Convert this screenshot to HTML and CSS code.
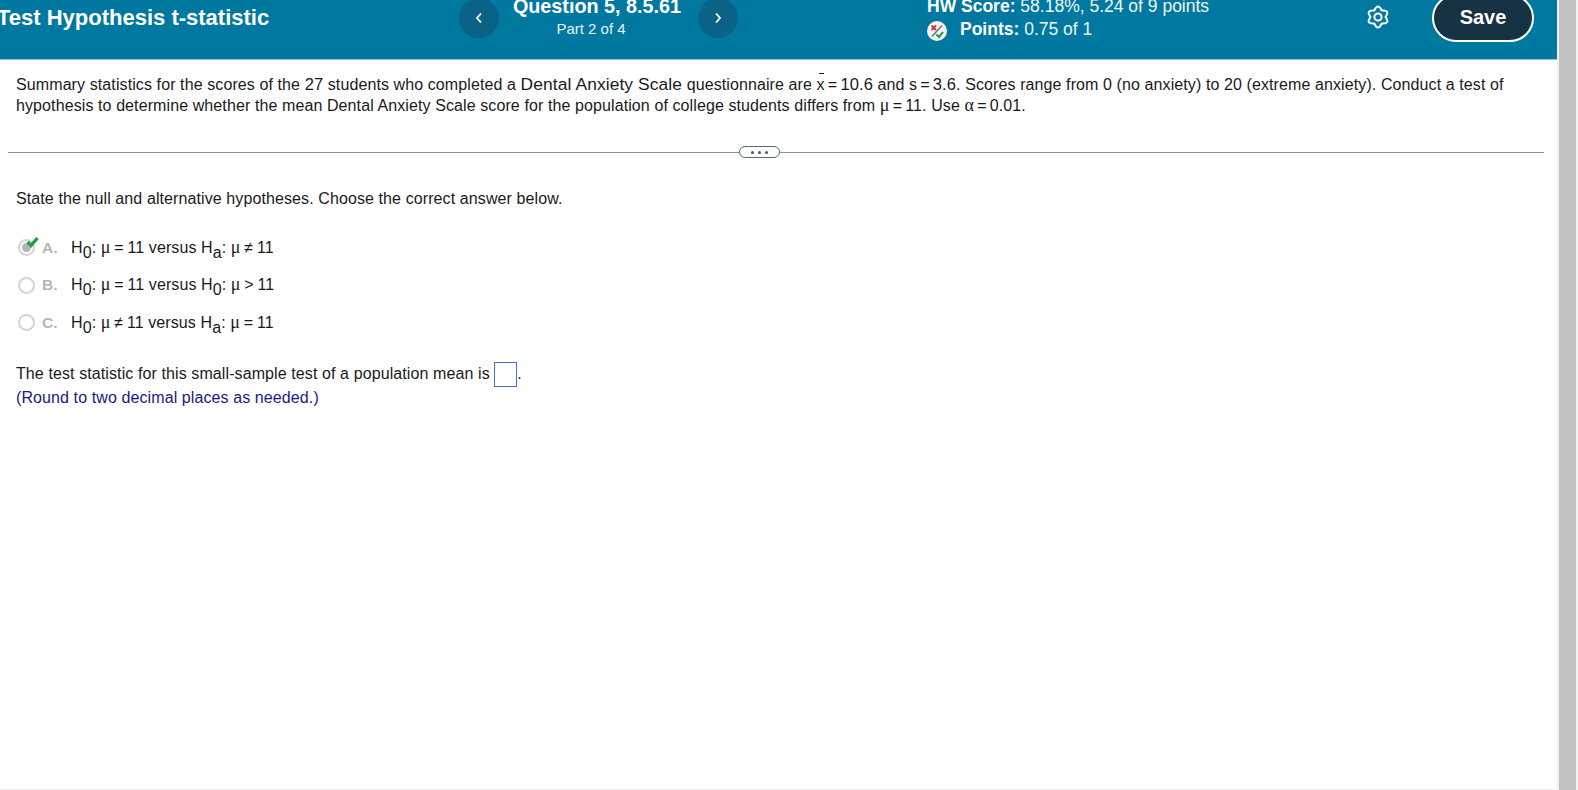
FILE: index.html
```html
<!DOCTYPE html>
<html lang="en">
<head>
    <meta charset="UTF-8">
    <title>Test Hypothesis t-statistic</title>
    <link rel="stylesheet" href="styles.css">
</head>
<body>
    <div class="page">
        <div class="main">
            <div class="header">
                <div class="title">Test Hypothesis t-statistic</div>
                <div class="nav">
                    <button class="nav-btn">
                        <svg width="8" height="12" viewBox="0 0 8 12"><path d="M6 1.5 2 6l4 4.5" fill="none" stroke="#fff" stroke-width="1.8"/></svg>
                    </button>
                    <div class="nav-text">
                        <div class="question">Question 5, 8.5.61</div>
                        <div class="part">Part 2 of 4</div>
                    </div>
                    <button class="nav-btn">
                        <svg width="8" height="12" viewBox="0 0 8 12"><path d="M2 1.5 6 6l-4 4.5" fill="none" stroke="#fff" stroke-width="1.8"/></svg>
                    </button>
                </div>
                <div class="score">
                    <div class="score-line"><b>HW Score:</b> 58.18%, 5.24 of 9 points</div>
                    <div class="score-line points">
                        <svg class="points-icon" width="20" height="20" viewBox="0 0 20 20">
                            <circle cx="10" cy="10" r="10" fill="#f2f2f2"/>
                            <path d="M4.5 4.5 9 9M9 4.5 4.500 9" stroke="#d0312d" stroke-width="1.8"/>
                            <path d="M5 15.500 15 4.500" stroke="#666" stroke-width="1.3"/>
                            <path d="M9.500 13.500 12 16l4-5" fill="none" stroke="#1a9a3c" stroke-width="2"/>
                        </svg>
                        <span><b>Points:</b> 0.75 of 1</span>
                    </div>
                </div>
                <svg class="gear" width="24" height="24" viewBox="0 0 24 24" fill="none" stroke="#fff" stroke-width="2" stroke-linejoin="round">
                    <circle cx="12" cy="12" r="3.600"/>
                    <path d="M15.750 5.500Q24.560 4.750 19.500 12 24.560 19.250 15.750 18.500 12 26.500 8.250 18.500-.56 19.250 4.500 12-.56 4.750 8.250 5.500 12-2.500 15.750 5.500Z"/>
                </svg>
                <button class="save">Save</button>
            </div>

            <div class="content">
                <p class="intro">
                    Summary statistics for the scores of the <span class="num">27</span> students who completed a <span class="big">Dental Anxiety Scale</span> questionnaire are <span class="eq"><span class="xbar">x</span> = <span class="num">10.6</span></span> and <span class="eq">s = <span class="num">3.6</span></span>. Scores range from 0 (no anxiety) to 20 (extreme anxiety). Conduct a test of<br>
                    hypothesis to determine whether the mean Dental Anxiety Scale score for the population of college students differs from <span class="eq"><span class="greek">μ</span> = 11</span>. Use <span class="eq"><span class="greek">α</span> = 0.01</span>.
                </p>

                <div class="divider">
                    <span class="divider-line left"></span>
                    <span class="more"><i></i><i></i><i></i></span>
                    <span class="divider-line"></span>
                </div>

                <p class="prompt">State the null and alternative hypotheses. Choose the correct answer below.</p>

                <div class="options">
                    <div class="option">
                        <span class="radio selected">
                            <svg class="check" width="13" height="12" viewBox="0 0 13 12"><path d="M1.500 6 5 9.500 11.500 2" fill="none" stroke="#2a9a3a" stroke-width="3.400"/></svg>
                        </span>
                        <span class="letter">A.</span>
                        <span>H<sub>0</sub>: <span class="eq"><span class="greek">μ</span> = 11</span> versus H<sub>a</sub>: <span class="eq"><span class="greek">μ</span> ≠ 11</span></span>
                    </div>
                    <div class="option">
                        <span class="radio"></span>
                        <span class="letter">B.</span>
                        <span>H<sub>0</sub>: <span class="eq"><span class="greek">μ</span> = 11</span> versus H<sub>0</sub>: <span class="eq"><span class="greek">μ</span> &gt; 11</span></span>
                    </div>
                    <div class="option">
                        <span class="radio"></span>
                        <span class="letter">C.</span>
                        <span>H<sub>0</sub>: <span class="eq"><span class="greek">μ</span> ≠ 11</span> versus H<sub>a</sub>: <span class="eq"><span class="greek">μ</span> = 11</span></span>
                    </div>
                </div>

                <p class="answer">The test statistic for this small-sample test of a population mean is <span class="answer-box"></span>.</p>
                <p class="hint">(Round to two decimal places as needed.)</p>
            </div>
        </div>
        <div class="scrollbar"><div class="thumb"></div></div>
    </div>
</body>
</html>
```

FILE: styles.css
```css
* {
    box-sizing: border-box;
}

html, body {
    height: 100%;
}

body {
    margin: 0;
    font-family: "Liberation Sans", Arial, sans-serif;
    font-size: 16px;
    color: #1a1a1a;
    background: #fff;
    overflow: hidden;
}

.page {
    display: flex;
    height: 790px;
}

.main {
    width: 1557px;
    border-bottom: 1px solid #eee;
}

.header {
    display: flex;
    align-items: flex-start;
    height: 60px;
    background: #00789f;
    border-bottom: 1px solid #8fc4d6;
    color: #fff;
    overflow: hidden;
}

.title {
    width: 462px;
    flex: none;
    margin-left: -3px;
    margin-top: 4px;
    font-size: 22px;
    line-height: 27px;
    font-weight: bold;
}

.nav {
    display: flex;
    align-items: flex-start;
    width: 279px;
    flex: none;
    margin-top: -2px;
}

.nav-btn {
    display: flex;
    align-items: center;
    justify-content: center;
    width: 40px;
    height: 40px;
    flex: none;
    padding: 0;
    border: none;
    border-radius: 50%;
    background: #0a6386;
}

.nav-text {
    flex: 1;
    text-align: center;
    margin-top: -3px;
}

.question {
    padding-right: 3px;
    font-size: 19.800px;
    line-height: 22px;
    font-weight: bold;
}

.part {
    padding-right: 15px;
    font-size: 15px;
    line-height: 24px;
    color: #e6f1f5;
}

.score {
    width: 439px;
    flex: none;
    margin-left: 189px;
    margin-top: -5px;
    font-size: 17.500px;
}

.score-line {
    line-height: 22px;
    height: 22px;
    color: #eef6f9;
}

.score-line b {
    color: #fff;
}

.points {
    display: flex;
    align-items: center;
    gap: 13px;
    margin-top: 1px;
}

.points-icon {
    flex: none;
    margin-top: 3px;
}

.gear {
    flex: none;
    margin-top: 5px;
}

.save {
    width: 102px;
    height: 48px;
    flex: none;
    margin-left: 42px;
    margin-top: -6px;
    border: 2px solid #fff;
    border-radius: 26px;
    background: #163243;
    color: #fff;
    font-family: inherit;
    font-size: 20px;
    font-weight: bold;
    padding: 0 0 2px;
}

.content {
    padding: 0 8px;
    letter-spacing: 0.1px;
}

p {
    margin: 0;
}

.intro {
    padding: 14px 8px 0;
    line-height: 21px;
}

.big {
    font-size: 17.400px;
    line-height: 16px;
}

.eq {
    word-spacing: -1.400px;
}

.option .eq {
    word-spacing: -0.800px;
}

.num {
    font-size: 16.500px;
    line-height: 16px;
}

.greek {
    font-family: "Liberation Serif", serif;
    font-size: 18px;
    line-height: 16px;
}

.xbar {
    position: relative;
}

.xbar::before {
    content: "";
    position: absolute;
    top: -3px;
    left: 2px;
    width: 5px;
    height: 1px;
    background: #1a1a1a;
}

.divider {
    display: flex;
    align-items: center;
    margin-top: 30px;
    height: 12px;
    width: 1536px;
}

.divider-line {
    flex: 1;
    height: 1px;
    background: #8a94a0;
}

.divider-line.left {
    flex: none;
    width: 731px;
}

.more {
    display: flex;
    align-items: center;
    justify-content: center;
    gap: 4px;
    width: 41px;
    height: 12px;
    border: 1px solid #5a6a7a;
    border-radius: 6px;
}

.more i {
    width: 3px;
    height: 3px;
    border-radius: 50%;
    background: #4a5560;
}

.prompt {
    margin-top: 30px;
    padding-left: 8px;
    line-height: 22px;
}

.options {
    margin-top: 19px;
    margin-left: 10px;
}

.option {
    display: flex;
    align-items: center;
    height: 37.500px;
}

.radio {
    position: relative;
    width: 17px;
    height: 17px;
    flex: none;
    margin-right: 7px;
    border: 2px solid #d4d4d4;
    border-radius: 50%;
    background: #fff;
}

.radio.selected::before {
    content: "";
    display: block;
    width: 9px;
    height: 9px;
    margin: 2px;
    border-radius: 50%;
    background: #b5b5b5;
}

.check {
    position: absolute;
    top: -5px;
    left: 6px;
}

.letter {
    width: 29px;
    flex: none;
    font-weight: bold;
    font-size: 15.500px;
    color: #b5b5b5;
}

sub {
    font-size: 16px;
    line-height: 0;
    vertical-align: -5px;
}

.answer {
    margin-top: 19px;
    padding-left: 8px;
    line-height: 26px;
}

.answer-box {
    display: inline-block;
    width: 23px;
    height: 25px;
    vertical-align: middle;
    border: 1px solid #3d73c9;
}

.hint {
    padding-left: 8px;
    line-height: 22px;
    color: #1a1a80;
}

.scrollbar {
    width: 21px;
    height: 790px;
    padding: 0 2px;
    background: #f1f1f1;
}

.thumb {
    width: 17px;
    height: 100%;
    background: #c1c1c1;
}
```
